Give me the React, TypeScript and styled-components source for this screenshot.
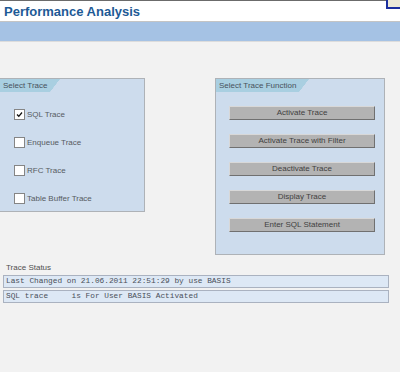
import React from "react";
import styled, { createGlobalStyle } from "styled-components";

const Global = createGlobalStyle`
  html, body { margin: 0; padding: 0; background: #f2f2f2; }
  body { font-family: "Liberation Sans", Arial, sans-serif; width: 400px; height: 372px; overflow: hidden; }
`;

const Page = styled.div`
  display: flex;
  flex-direction: column;
  width: 400px;
  height: 372px;
  background: #f2f2f2;
  border-top: 1px solid #6b6b6b;
  box-sizing: border-box;
`;

const TitleBar = styled.div`
  display: flex;
  justify-content: space-between;
  align-items: flex-start;
  height: 20px;
  background: #ffffff;
  border-bottom: 1px solid #c4c4c4;
`;

const Title = styled.h1`
  margin: 3px 0 0 4px;
  font-size: 13px;
  line-height: 15px;
  font-weight: bold;
  color: #1d5a96;
  font-family: "Liberation Sans", Arial, sans-serif;
`;

const CornerBox = styled.div`
  width: 12px;
  height: 7px;
  margin-top: -1px;
  background: #ece9d8;
  border-left: 2px solid #1b2f9e;
  border-bottom: 2px solid #1b2f9e;
`;

const AppToolbar = styled.div`
  height: 19px;
  background: #a5c2e4;
  border-bottom: 1px solid #dcdcdc;
`;

const Content = styled.div`
  display: flex;
  align-items: flex-start;
  gap: 70px;
  padding-top: 36px;
`;

const Group = styled.div<{ $width: number; $height: number; $noLeft?: boolean }>`
  display: flex;
  flex-direction: column;
  width: ${(p) => p.$width}px;
  height: ${(p) => p.$height}px;
  box-sizing: border-box;
  background: #cddced;
  border: 1px solid #aeb2b7;
  ${(p) => (p.$noLeft ? "border-left: none;" : "")}
`;

const TabWrap = styled.div`
  display: flex;
  height: 13px;
`;

const Tab = styled.div`
  height: 13px;
  padding: 0 3px 0 3px;
  background: #a9cfe1;
  font-size: 8px;
  line-height: 13px;
  color: #48525c;
  white-space: nowrap;
  box-sizing: border-box;
`;

const TabSlant = styled.div`
  width: 10px;
  height: 13px;
  background: linear-gradient(to bottom right, #a9cfe1 0 49%, transparent 51%);
`;

const CheckList = styled.div`
  display: flex;
  flex-direction: column;
  padding-top: 8px;
  padding-left: 14px;
`;

const CheckRow = styled.label`
  display: flex;
  align-items: center;
  gap: 2px;
  height: 28px;
  font-size: 8px;
  color: #565b61;
`;

const Box = styled.span`
  display: inline-flex;
  align-items: center;
  justify-content: center;
  width: 9px;
  height: 9px;
  background: #ffffff;
  border: 1px solid #858585;
`;

const ButtonList = styled.div`
  display: flex;
  flex-direction: column;
  gap: 14px;
  padding: 14px 0 0 13px;
`;

const Button = styled.button`
  width: 146px;
  height: 14px;
  padding: 0;
  box-sizing: border-box;
  background: #b3b3b3;
  border-top: 1px solid #d8d8d8;
  border-left: 1px solid #d8d8d8;
  border-right: 1px solid #707070;
  border-bottom: 1px solid #707070;
  font-family: "Liberation Sans", Arial, sans-serif;
  font-size: 8px;
  line-height: 12px;
  color: #414141;
`;

const Status = styled.div`
  display: flex;
  flex-direction: column;
  gap: 2px;
  padding: 8px 0 0 3px;
`;

const StatusLabel = styled.div`
  padding-left: 3px;
  font-size: 8px;
  line-height: 10px;
  color: #4f4f4f;
`;

const StatusRow = styled.div`
  width: 386px;
  height: 13px;
  box-sizing: border-box;
  background: #dde8f5;
  border: 1px solid #aab2c0;
  padding-left: 2px;
  font-family: "Liberation Mono", "Courier New", monospace;
  font-size: 7.8px;
  line-height: 11px;
  color: #4a505a;
  white-space: pre;
`;

const traces = [
  { label: "SQL Trace", checked: true },
  { label: "Enqueue Trace", checked: false },
  { label: "RFC Trace", checked: false },
  { label: "Table Buffer Trace", checked: false },
];

const functions = [
  "Activate Trace",
  "Activate Trace with Filter",
  "Deactivate Trace",
  "Display Trace",
  "Enter SQL Statement",
];

const Check = () => (
  <svg width="7" height="7" viewBox="0 0 7 7">
    <path d="M1 3.5 L2.8 5.3 L6 1.5" fill="none" stroke="#111" strokeWidth="1.3" />
  </svg>
);

export default function App() {
  return (
    <>
      <Global />
      <Page>
        <TitleBar>
          <Title>Performance Analysis</Title>
          <CornerBox />
        </TitleBar>
        <AppToolbar />
        <Content>
          <Group $width={145} $height={134} $noLeft>
            <TabWrap>
              <Tab>Select Trace</Tab>
              <TabSlant />
            </TabWrap>
            <CheckList>
              {traces.map((t) => (
                <CheckRow key={t.label}>
                  <Box>{t.checked && <Check />}</Box>
                  {t.label}
                </CheckRow>
              ))}
            </CheckList>
          </Group>
          <Group $width={170} $height={177}>
            <TabWrap>
              <Tab>Select Trace Function</Tab>
              <TabSlant />
            </TabWrap>
            <ButtonList>
              {functions.map((f) => (
                <Button key={f}>{f}</Button>
              ))}
            </ButtonList>
          </Group>
        </Content>
        <Status>
          <StatusLabel>Trace Status</StatusLabel>
          <StatusRow>Last Changed on 21.06.2011 22:51:29 by use BASIS</StatusRow>
          <StatusRow>{"SQL trace     is For User BASIS Activated"}</StatusRow>
        </Status>
      </Page>
    </>
  );
}
